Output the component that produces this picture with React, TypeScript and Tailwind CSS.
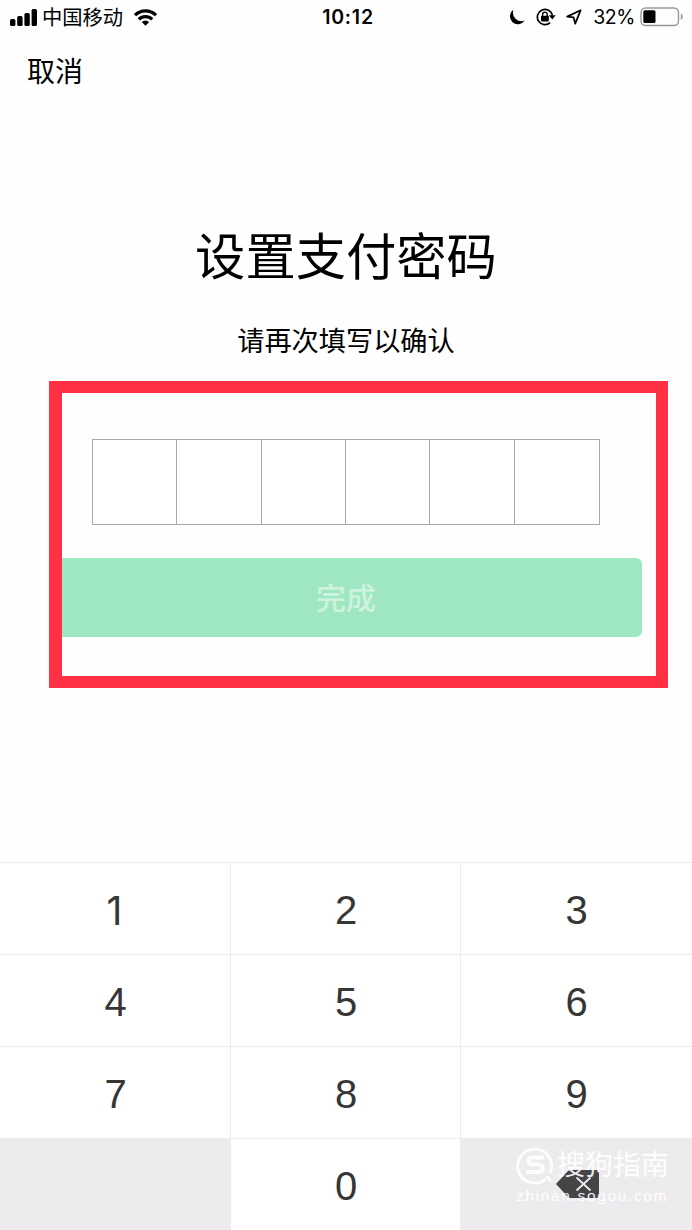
import React from "react";

const cjk = "font-['Liberation_Sans','Noto_Sans_CJK_SC',sans-serif]";

function StatusBar() {
  return (
    <header className="flex h-[34px] shrink-0 items-center text-black">
      <div className="flex flex-1 items-center pl-[10px]">
        <svg width="27" height="17" viewBox="0 0 27 17" fill="currentColor">
          <rect x="0" y="10" width="5.4" height="7" rx="1.6" />
          <rect x="7.2" y="7" width="5.4" height="10" rx="1.6" />
          <rect x="14.4" y="4" width="5.4" height="13" rx="1.6" />
          <rect x="21.6" y="0" width="5.4" height="17" rx="1.6" />
        </svg>
        <span className="ml-[5px] pt-[2px] text-[20.3px] leading-[34px]">中国移动</span>
        <svg className="ml-[11px]" width="23" height="17" viewBox="0 0 23 17">
          <g fill="none" stroke="currentColor" strokeWidth="3.2">
            <path d="M1 6.2a15 15 0 0 1 21 0" />
            <path d="M4.8 10.3a9.6 9.6 0 0 1 13.4 0" />
          </g>
          <path d="M11.5 16.7 7.8 13a5.3 5.3 0 0 1 7.4 0z" fill="currentColor" />
        </svg>
      </div>
      <div className="pl-[2px] font-[Inter,sans-serif] text-[19.5px] font-semibold leading-[34px] tracking-[0.8px]">10:12</div>
      <div className="flex flex-1 items-center justify-end pr-[8px]">
        <svg width="16" height="16" viewBox="0 0 16 16" fill="currentColor">
          <path d="M4.6.5A8 8 0 1 0 15.7 11.5 8.5 8.5 0 0 1 4.6.5z" />
        </svg>
        <svg className="ml-[11px]" width="20" height="18" viewBox="0 0 20 18">
          <path d="M14.1 14.7A7.6 7.6 0 1 1 16.4 7.4" fill="none" stroke="currentColor" strokeWidth="1.7" />
          <path d="M12.8 7.3h6.8l-3.2 4.2z" fill="currentColor" />
          <rect x="5" y="7.7" width="7.8" height="5.7" rx="0.8" fill="currentColor" />
          <path d="M6.6 8V6.4a2.3 2.3 0 0 1 4.6 0V8" fill="none" stroke="currentColor" strokeWidth="1.4" />
        </svg>
        <svg className="ml-[10px]" width="16" height="16" viewBox="0 0 16 16">
          <path d="M1.2 7.6 14.6 1.3 9.2 14.6 7.6 8.4z" fill="none" stroke="currentColor" strokeWidth="1.8" strokeLinejoin="round" />
        </svg>
        <span className="ml-[11px] font-[Inter,sans-serif] text-[19.5px] leading-[34px] tracking-[-0.4px]">32%</span>
        <svg className="ml-[5px]" width="44" height="20" viewBox="0 0 44 20">
          <rect x="1" y="1" width="37.5" height="17.5" rx="4.5" fill="none" stroke="#999" strokeWidth="1.4" />
          <rect x="3.3" y="3.3" width="12.2" height="12.8" rx="1.5" fill="#000" />
          <path d="M40.8 6.5c2.6 1 2.6 5.5 0 6.5z" fill="#999" />
        </svg>
      </div>
    </header>
  );
}

function Backspace() {
  return (
    <svg className="-mt-[3px] ml-px" width="43" height="28" viewBox="0 0 43 28">
      <path d="M0 14 11.5 1.5Q13 0 15 0H40.5Q43 0 43 2.5v23Q43 28 40.5 28H15q-2 0-3.5-1.5z" fill="#454447" />
      <path d="M20.5 7.5l14 13m0-13l-14 13" stroke="#eeecef" strokeWidth="1.8" />
    </svg>
  );
}

function Watermark() {
  return (
    <div className="absolute bottom-[24px] right-[23px] flex w-[153px] flex-col text-white/90">
      <div className="flex h-[41px] items-center justify-between">
        <svg width="39" height="39" viewBox="0 0 39 39" fill="none" stroke="currentColor">
          <path d="M29.5 33.2A17 17 0 1 1 34.2 27M30.5 30.5l4.5 5" strokeWidth="2.8" />
          <path d="M28 11.5H17c-6 0-6 7 0 7h5c6.5 0 6.5 7.500 0 7.500H10.500" strokeWidth="4.2" />
        </svg>
        <span className="whitespace-nowrap text-[28px] leading-[40px]">搜狗指南</span>
      </div>
      <span className="whitespace-nowrap text-[15.5px] leading-[20px] tracking-[1.65px]">zhinan.sogou.com</span>
    </div>
  );
}

const keys = ["1", "2", "3", "4", "5", "6", "7", "8", "9", "", "0", "back"];

function Keypad() {
  return (
    <section className="grid h-[368px] shrink-0 grid-cols-[231px_230px_231px] grid-rows-4 text-[40px] text-[#363636]">
      {keys.map((key, i) => (
        <button
          key={i}
          className={
            "flex items-center justify-center border-t border-[#ececee] " +
            (i % 3 ? "-ml-px border-l " : "") +
            (key === "1" ? "pr-[2px] pt-[5px] font-[Inter,sans-serif] text-[39px] " : "pt-[2px] ") +
            (key === "" || key === "back" ? "bg-[#edebee]" : "bg-white")
          }
        >
          {key === "back" ? <Backspace /> : key}
        </button>
      ))}
    </section>
  );
}

export default function App() {
  return (
    <div className={"relative flex h-[1230px] w-[692px] flex-col overflow-hidden bg-[#fefefe] text-black " + cjk}>
      <StatusBar />
      <nav className="flex h-[74px] shrink-0 items-center pl-[27px] pt-[3px]">
        <button className="text-[28px] leading-[40px]">取消</button>
      </nav>
      <main className="flex flex-1 flex-col items-center">
        <h1 className="mt-[114px] text-[50.3px] leading-[72px]">设置支付密码</h1>
        <p className="mt-[28px] text-[27.2px] leading-[40px]">请再次填写以确认</p>
        <div className="mt-[77px] grid h-[86px] w-[508px] grid-cols-6 border border-[#aaa] bg-white">
          {[0, 1, 2, 3, 4, 5].map((n) => (
            <div key={n} className={n ? "-ml-px border-l border-[#aaa]" : ""} />
          ))}
        </div>
        <button className="mt-[33px] flex h-[79px] w-[592px] items-center justify-center rounded-[6px] bg-[#9ee7c1] pt-px text-[30px] font-medium text-[#cdf3df]">
          完成
        </button>
      </main>
      <Keypad />
      <div className="pointer-events-none absolute left-[49px] top-[381px] h-[307px] w-[619px] border-[12px] border-l-[13px] border-[#ff3043]" />
      <Watermark />
    </div>
  );
}
